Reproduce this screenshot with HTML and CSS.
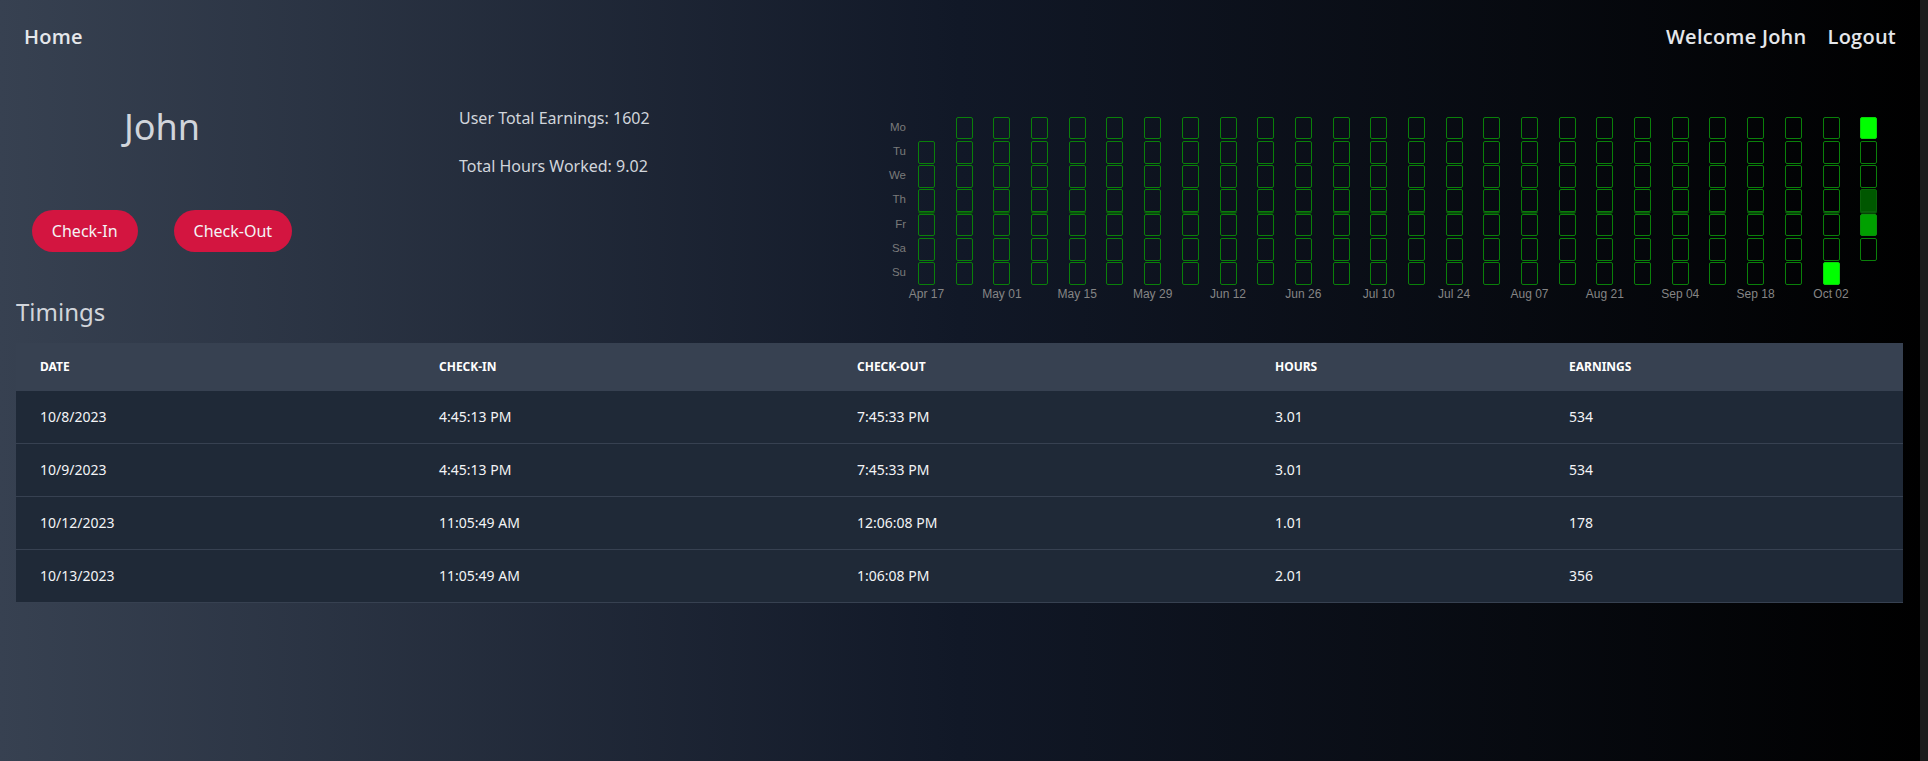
FILE: index.html
```html
<!DOCTYPE html>
<html lang="en">
<head>
<meta charset="utf-8">
<title>Dashboard</title>
<link rel="stylesheet" href="styles.css">
</head>
<body>
<div class="page">
  <nav class="nav">
    <a class="nav-link">Home</a>
    <div class="nav-right">
      <span class="nav-link">Welcome John</span>
      <a class="nav-link">Logout</a>
    </div>
  </nav>

  <section class="top">
    <div class="profile">
      <h1 class="name">John</h1>
      <div class="actions">
        <button class="btn">Check-In</button>
        <button class="btn">Check-Out</button>
      </div>
    </div>

    <div class="stats">
      <p>User Total Earnings: 1602</p>
      <p>Total Hours Worked: 9.02</p>
    </div>

    <div class="heatmap">
      <div class="days">
        <span>Mo</span><span>Tu</span><span>We</span><span>Th</span><span>Fr</span><span>Sa</span><span>Su</span>
      </div>
      <div class="chart">
        <div class="cells">
          <div class="week"><i class="c n"></i><i class="c"></i><i class="c"></i><i class="c"></i><i class="c"></i><i class="c"></i><i class="c"></i></div>
          <div class="week"><i class="c"></i><i class="c"></i><i class="c"></i><i class="c"></i><i class="c"></i><i class="c"></i><i class="c"></i></div>
          <div class="week"><i class="c"></i><i class="c"></i><i class="c"></i><i class="c"></i><i class="c"></i><i class="c"></i><i class="c"></i></div>
          <div class="week"><i class="c"></i><i class="c"></i><i class="c"></i><i class="c"></i><i class="c"></i><i class="c"></i><i class="c"></i></div>
          <div class="week"><i class="c"></i><i class="c"></i><i class="c"></i><i class="c"></i><i class="c"></i><i class="c"></i><i class="c"></i></div>
          <div class="week"><i class="c"></i><i class="c"></i><i class="c"></i><i class="c"></i><i class="c"></i><i class="c"></i><i class="c"></i></div>
          <div class="week"><i class="c"></i><i class="c"></i><i class="c"></i><i class="c"></i><i class="c"></i><i class="c"></i><i class="c"></i></div>
          <div class="week"><i class="c"></i><i class="c"></i><i class="c"></i><i class="c"></i><i class="c"></i><i class="c"></i><i class="c"></i></div>
          <div class="week"><i class="c"></i><i class="c"></i><i class="c"></i><i class="c"></i><i class="c"></i><i class="c"></i><i class="c"></i></div>
          <div class="week"><i class="c"></i><i class="c"></i><i class="c"></i><i class="c"></i><i class="c"></i><i class="c"></i><i class="c"></i></div>
          <div class="week"><i class="c"></i><i class="c"></i><i class="c"></i><i class="c"></i><i class="c"></i><i class="c"></i><i class="c"></i></div>
          <div class="week"><i class="c"></i><i class="c"></i><i class="c"></i><i class="c"></i><i class="c"></i><i class="c"></i><i class="c"></i></div>
          <div class="week"><i class="c"></i><i class="c"></i><i class="c"></i><i class="c"></i><i class="c"></i><i class="c"></i><i class="c"></i></div>
          <div class="week"><i class="c"></i><i class="c"></i><i class="c"></i><i class="c"></i><i class="c"></i><i class="c"></i><i class="c"></i></div>
          <div class="week"><i class="c"></i><i class="c"></i><i class="c"></i><i class="c"></i><i class="c"></i><i class="c"></i><i class="c"></i></div>
          <div class="week"><i class="c"></i><i class="c"></i><i class="c"></i><i class="c"></i><i class="c"></i><i class="c"></i><i class="c"></i></div>
          <div class="week"><i class="c"></i><i class="c"></i><i class="c"></i><i class="c"></i><i class="c"></i><i class="c"></i><i class="c"></i></div>
          <div class="week"><i class="c"></i><i class="c"></i><i class="c"></i><i class="c"></i><i class="c"></i><i class="c"></i><i class="c"></i></div>
          <div class="week"><i class="c"></i><i class="c"></i><i class="c"></i><i class="c"></i><i class="c"></i><i class="c"></i><i class="c"></i></div>
          <div class="week"><i class="c"></i><i class="c"></i><i class="c"></i><i class="c"></i><i class="c"></i><i class="c"></i><i class="c"></i></div>
          <div class="week"><i class="c"></i><i class="c"></i><i class="c"></i><i class="c"></i><i class="c"></i><i class="c"></i><i class="c"></i></div>
          <div class="week"><i class="c"></i><i class="c"></i><i class="c"></i><i class="c"></i><i class="c"></i><i class="c"></i><i class="c"></i></div>
          <div class="week"><i class="c"></i><i class="c"></i><i class="c"></i><i class="c"></i><i class="c"></i><i class="c"></i><i class="c"></i></div>
          <div class="week"><i class="c"></i><i class="c"></i><i class="c"></i><i class="c"></i><i class="c"></i><i class="c"></i><i class="c"></i></div>
          <div class="week"><i class="c"></i><i class="c"></i><i class="c"></i><i class="c"></i><i class="c"></i><i class="c"></i><i class="c l3"></i></div>
          <div class="week"><i class="c l3"></i><i class="c"></i><i class="c"></i><i class="c l1"></i><i class="c l2"></i><i class="c"></i><i class="c n"></i></div>
        </div>
        <div class="months">
          <span>Apr 17</span><span></span><span>May 01</span><span></span><span>May 15</span><span></span><span>May 29</span><span></span><span>Jun 12</span><span></span><span>Jun 26</span><span></span><span>Jul 10</span><span></span><span>Jul 24</span><span></span><span>Aug 07</span><span></span><span>Aug 21</span><span></span><span>Sep 04</span><span></span><span>Sep 18</span><span></span><span>Oct 02</span><span></span>
        </div>
      </div>
    </div>
  </section>

  <section class="timings">
    <h2 class="section-title">Timings</h2>
    <table class="table">
      <colgroup>
        <col class="col-date"><col class="col-in"><col class="col-out"><col class="col-hours"><col class="col-earn">
      </colgroup>
      <thead>
        <tr><th>Date</th><th>Check-In</th><th>Check-Out</th><th>Hours</th><th>Earnings</th></tr>
      </thead>
      <tbody>
        <tr><td>10/8/2023</td><td>4:45:13 PM</td><td>7:45:33 PM</td><td>3.01</td><td>534</td></tr>
        <tr><td>10/9/2023</td><td>4:45:13 PM</td><td>7:45:33 PM</td><td>3.01</td><td>534</td></tr>
        <tr><td>10/12/2023</td><td>11:05:49 AM</td><td>12:06:08 PM</td><td>1.01</td><td>178</td></tr>
        <tr><td>10/13/2023</td><td>11:05:49 AM</td><td>1:06:08 PM</td><td>2.01</td><td>356</td></tr>
      </tbody>
    </table>
  </section>
</div>
</body>
</html>
```
FILE: styles.css
```css
html, body {
  margin: 0;
  padding: 0;
}

body {
  background: #1c1c1c;
  font-family: "Noto Sans", "Open Sans", sans-serif;
  color: #d1d5db;
}

.page {
  width: 1920px;
  min-height: 761px;
  background: linear-gradient(to right, #374151, #111827, #000000);
}

/* Nav */
.nav {
  display: flex;
  justify-content: space-between;
  align-items: center;
  padding: 23px 24px 21px;
  font-family: "Open Sans", "Noto Sans", sans-serif;
  font-size: 20px;
  line-height: 28px;
  font-weight: 600;
  letter-spacing: 0.25px;
  color: #e5e7eb;
}

.nav-right {
  display: flex;
  gap: 21px;
}

.nav-link {
  cursor: pointer;
}

/* Top */
.top {
  display: flex;
  align-items: flex-start;
  height: 224px;
  padding: 0 24px;
}

.profile {
  width: 276px;
  padding-top: 27px;
  display: flex;
  flex-direction: column;
  align-items: center;
}

.name {
  margin: 0;
  font-size: 36px;
  line-height: 55px;
  font-weight: 400;
  color: #d1d5db;
}

.actions {
  display: flex;
  gap: 36px;
  margin-top: 56px;
}

.btn {
  background: #d31540;
  color: #f3f4f6;
  border: 0;
  border-radius: 9999px;
  padding: 9px 20px;
  font-family: "Noto Sans", sans-serif;
  font-size: 16px;
  line-height: 24px;
  cursor: pointer;
}

.stats {
  width: 425px;
  margin-left: 159px;
  padding-top: 33.5px;
}

.stats p {
  margin: 0 0 24px;
  font-size: 16px;
  line-height: 24px;
  color: #d1d5db;
}

/* Heatmap */
.heatmap {
  display: flex;
  gap: 12px;
  padding-top: 44.7px;
}

.days {
  width: 22px;
  display: flex;
  flex-direction: column;
  gap: 1.67px;
  font-family: "Liberation Sans", Arial, sans-serif;
  font-size: 11.5px;
  color: #7a7a7a;
  text-align: right;
}

.days span {
  height: 22.6px;
  line-height: 21.6px;
}

.cells {
  display: flex;
  gap: 20.7px;
}

.week {
  width: 17px;
  display: flex;
  flex-direction: column;
  gap: 1.67px;
}

.c {
  display: block;
  height: 22.6px;
  box-sizing: border-box;
  border: 1.5px solid #0a800a;
  border-radius: 2px;
}

.week .c:nth-child(4) {
  box-shadow: 0 1.7px 0 #0a5a0a;
}

.c.n {
  visibility: hidden;
}

.c.l1 {
  background: #005700;
  border-color: #0a620a;
}

.c.l2 {
  background: #00a000;
  border-color: #0a900a;
}

.c.l3 {
  background: #00ff00;
  border-color: #0bd40b;
}

.months {
  display: flex;
  gap: 20.7px;
  margin-top: 3.5px;
  font-family: "Liberation Sans", Arial, sans-serif;
  font-size: 12px;
  line-height: 13px;
  color: #858585;
}

.months span {
  width: 17px;
  display: flex;
  justify-content: center;
  white-space: nowrap;
}

/* Timings */
.timings {
  padding: 0 17px 0 16px;
}

.section-title {
  margin: 0;
  font-size: 24px;
  line-height: 32px;
  font-weight: 400;
  color: #d1d5db;
}

.table {
  width: 100%;
  margin-top: 15px;
  border-collapse: separate;
  border-spacing: 0;
  table-layout: fixed;
}

.col-date { width: 399px; }
.col-in { width: 418px; }
.col-out { width: 418px; }
.col-hours { width: 294px; }
.col-earn { width: auto; }

.table th {
  background: #374151;
  text-align: left;
  padding: 16px 24px;
  font-size: 12px;
  line-height: 16px;
  font-weight: 700;
  text-transform: uppercase;
  color: #ffffff;
}

.table td {
  background: #1f2937;
  padding: 16px 24px;
  font-size: 14px;
  line-height: 20px;
  color: #f3f4f6;
  border-bottom: 1px solid #374151;
}
```
